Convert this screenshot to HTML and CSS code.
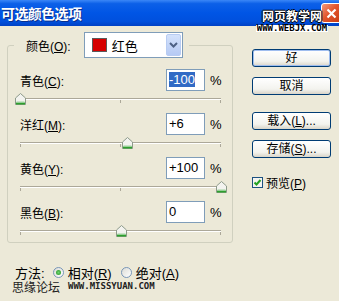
FILE: index.html
```html
<!DOCTYPE html>
<html lang="zh-CN">
<head>
    <meta charset="UTF-8" />
    <title>可选颜色选项</title>
    <link rel="stylesheet" href="styles.css">
</head>
<body>
    <svg class="defs" width="0" height="0">
        <symbol id="thumb" viewBox="0 0 11 12">
            <path d="M5.5 0.5 L10.5 5 V11.5 H0.5 V5 Z" fill="#f3f3ef" stroke="#8d9a8a" />
            <path d="M1 10.5 H10" stroke="#2ea02e" stroke-width="2" />
            <path d="M1.5 9 H9.5" stroke="#9ed29e" stroke-width="1" />
        </symbol>
    </svg>
    <div class="window">
        <div class="titlebar">
            <span class="title">可选颜色选项</span>
            <span class="close">
                <svg width="11" height="11" viewBox="0 0 11 11"><path d="M1.5 1.5 L9.5 9.5 M9.5 1.5 L1.5 9.5" stroke="#fff" stroke-width="2.2" /></svg>
            </span>
        </div>
        <!-- 水印 -->
        <div class="mark">
            <span class="mark-cn">网页教学网</span>
            <span class="mark-en">WWW.WEBJX.COM</span>
        </div>

        <div class="content">
            <div class="left">
                <fieldset class="group">
                    <legend class="group-title">
                        <div class="legend-inner">
                            <span class="label">颜色(<u>O</u>):</span>
                            <div class="combo">
                                <span class="swatch"></span>
                                <span class="combo-text">红色</span>
                                <span class="combo-btn">
                                    <svg width="9" height="6" viewBox="0 0 9 6"><path d="M1 1 L4.5 4.5 L8 1" fill="none" stroke="#4d6185" stroke-width="2" /></svg>
                                </span>
                            </div>
                        </div>
                    </legend>
                    <div class="rows">
                        <div class="row">
                            <div class="row-head">
                                <span class="label">青色(<u>C</u>):</span>
                                <span class="field"><span class="sel">-100</span></span>
                                <span class="pct">%</span>
                            </div>
                            <div class="slider">
                                <div class="track"></div>
                                <div class="ticks"><i></i><i></i><i></i></div>
                                <svg class="thumb" style="left:0%"><use href="#thumb" /></svg>
                            </div>
                        </div>
                        <div class="row">
                            <div class="row-head">
                                <span class="label">洋红(<u>M</u>):</span>
                                <span class="field">+6</span>
                                <span class="pct">%</span>
                            </div>
                            <div class="slider">
                                <div class="track"></div>
                                <div class="ticks"><i></i><i></i><i></i></div>
                                <svg class="thumb" style="left:53%"><use href="#thumb" /></svg>
                            </div>
                        </div>
                        <div class="row">
                            <div class="row-head">
                                <span class="label">黄色(<u>Y</u>):</span>
                                <span class="field">+100</span>
                                <span class="pct">%</span>
                            </div>
                            <div class="slider">
                                <div class="track"></div>
                                <div class="ticks"><i></i><i></i><i></i></div>
                                <svg class="thumb" style="left:100%"><use href="#thumb" /></svg>
                            </div>
                        </div>
                        <div class="row">
                            <div class="row-head">
                                <span class="label">黑色(<u>B</u>):</span>
                                <span class="field">0</span>
                                <span class="pct">%</span>
                            </div>
                            <div class="slider">
                                <div class="track"></div>
                                <div class="ticks"><i></i><i></i><i></i></div>
                                <svg class="thumb" style="left:50%"><use href="#thumb" /></svg>
                            </div>
                        </div>
                    </div>
                </fieldset>

                <div class="method">
                    <span>方法:</span>
                    <span class="radio checked"></span>
                    <span class="opt">相对(<u>R</u>)</span>
                    <span class="radio"></span>
                    <span class="opt">绝对(<u>A</u>)</span>
                </div>
                <div class="footer">
                    <span class="footer-cn">思缘论坛</span>
                    <span class="footer-en">WWW.MISSYUAN.COM</span>
                </div>
            </div>

            <div class="right">
                <button class="btn default">好</button>
                <button class="btn">取消</button>
                <button class="btn spaced">载入(<u>L</u>)...</button>
                <button class="btn">存储(<u>S</u>)...</button>
                <div class="check-row">
                    <span class="check">
                        <svg width="9" height="9" viewBox="0 0 9 9"><path d="M1.5 4.5 L3.5 6.5 L7.5 2" fill="none" stroke="#21a121" stroke-width="2" /></svg>
                    </span>
                    <span>预览(<u>P</u>)</span>
                </div>
            </div>
        </div>
    </div>
</body>
</html>
```

FILE: styles.css
```css
* {
    box-sizing: border-box;
}

body {
    margin: 0;
    background-color: #ece9d8;
    font-family: "Liberation Sans", "Noto Sans CJK SC", sans-serif;
    font-size: 12px;
    color: #000;
}

.defs {
    position: absolute;
}

.window {
    position: relative;
    width: 339px;
    height: 301px;
    overflow: hidden;
}

/* 标题栏 */
.titlebar {
    height: 26px;
    display: flex;
    align-items: center;
    justify-content: space-between;
    padding-left: 1px;
    background: linear-gradient(#3b87f7 0%, #0c60e8 14%, #0055e5 50%, #0050dd 82%, #0041c4 100%);
}

.title {
    color: #fff;
    font: bold 14px "Noto Sans CJK SC", sans-serif;
    letter-spacing: -0.6px;
    text-shadow: 1px 1px 0 #0a2f8c;
}

.close {
    align-self: flex-start;
    margin-top: 3px;
    margin-right: -3px;
    width: 21px;
    height: 20px;
    border: 1px solid #fff;
    border-radius: 3px;
    background: linear-gradient(135deg, #f39a7c, #e2552d 45%, #c73c12);
    display: flex;
    align-items: center;
    justify-content: center;
}

.mark {
    position: absolute;
    top: 9px;
    left: 256px;
    width: 72px;
    display: flex;
    flex-direction: column;
    align-items: center;
    z-index: 2;
}

.mark-cn {
    color: #fff;
    font: bold 12px "Noto Sans CJK SC", sans-serif;
    line-height: 13px;
    text-shadow: 1px 0 0 #000, -1px 0 0 #000, 0 1px 0 #000, 0 -1px 0 #000;
}

.mark-en {
    margin-top: 3px;
    width: 72px;
    text-align: center;
    background-color: #fff;
    font: bold 9px "DejaVu Sans Mono", monospace;
    line-height: 7px;
    color: #000;
}

/* 主体 */
.content {
    display: flex;
}

.left {
    width: 233px;
    padding: 6px 0 0 7px;
}

.group {
    margin: 0;
    width: 226px;
    border: 1px solid #d0d0bf;
    border-radius: 3px;
    padding: 11px 11px 3px 6px;
}

.group-title {
    padding: 0 6px 0 12px;
}

.legend-inner {
    display: flex;
    align-items: center;
}

.combo {
    margin-left: 13px;
    width: 99px;
    height: 26px;
    border: 1px solid #7f9db9;
    background-color: #fff;
    display: flex;
    align-items: center;
    padding-left: 7px;
}

.swatch {
    width: 15px;
    height: 14px;
    background-color: #d60000;
    border: 1px solid #5a5a5a;
}

.combo-text {
    margin-left: 5px;
    font-size: 13px;
}

.combo-btn {
    margin-left: auto;
    margin-right: 1px;
    width: 15px;
    height: 22px;
    border: 1px solid #b8ccf2;
    border-radius: 2px;
    background: linear-gradient(#d4e2fb, #b6caf4);
    display: flex;
    align-items: center;
    justify-content: center;
}

.rows {
    margin-left: 6px;
}

.row {
    margin-bottom: 6px;
}

.row:last-child {
    margin-bottom: 0;
}

.row-head {
    display: flex;
    align-items: center;
    height: 22px;
}

.row-head .label {
    flex: 1;
}

.field {
    width: 39px;
    height: 22px;
    border: 1px solid #7f9db9;
    background-color: #fff;
    padding-left: 2px;
    font-size: 13px;
    line-height: 20px;
}

.sel {
    background-color: #316ac5;
    color: #fff;
}

.pct {
    width: 11px;
    margin-left: 5px;
    font-size: 13px;
}

/* 滑块 */
.slider {
    position: relative;
    width: 201px;
    height: 16px;
    padding-top: 7px;
}

.track {
    height: 2px;
    border-top: 1px solid #aca899;
    border-bottom: 1px solid #fff;
}

.ticks {
    display: flex;
    justify-content: space-between;
}

.ticks i {
    width: 1px;
    height: 3px;
    background-color: #aca899;
}

.thumb {
    position: absolute;
    top: 2px;
    width: 11px;
    height: 12px;
    margin-left: -5px;
}

/* 方法 */
.method {
    margin-top: 22px;
    padding-left: 8px;
    display: flex;
    align-items: center;
    height: 14px;
    font-size: 13px;
}

.radio {
    width: 11px;
    height: 11px;
    margin-left: 8px;
    border: 1px solid #7896b8;
    border-radius: 50%;
    background: linear-gradient(135deg, #dcdcd6, #fff);
    display: flex;
    align-items: center;
    justify-content: center;
}

.radio + .opt {
    margin-left: 4px;
}

.opt + .radio {
    margin-left: 9px;
}

.radio.checked::after {
    content: "";
    width: 5px;
    height: 5px;
    border-radius: 50%;
    background: radial-gradient(#6fd36f, #1e8f1e);
}

.footer {
    display: flex;
    align-items: center;
    height: 14px;
    padding-left: 5px;
}

.footer-cn {
    font-size: 12px;
    color: #222;
}

.footer-en {
    margin-left: 8px;
    font: bold 9px "DejaVu Sans Mono", monospace;
    color: #222;
}

/* 右侧按钮 */
.right {
    margin-left: 19px;
    width: 79px;
    padding-top: 23px;
    display: flex;
    flex-direction: column;
}

.btn {
    height: 18px;
    margin: 0 0 10px 0;
    padding: 0;
    border: 1px solid #003c74;
    border-radius: 3px;
    background: linear-gradient(#ffffff, #f3f3ee 70%, #d9d4c8);
    font-family: "Liberation Sans", "Noto Sans CJK SC", sans-serif;
    font-size: 12px;
    line-height: 16px;
    color: #000;
}

.btn.default {
    box-shadow: inset 0 0 0 1px #9fbdef;
}

.btn.spaced {
    margin-top: 7px;
}

.check-row {
    margin-top: 9px;
    display: flex;
    align-items: center;
    height: 11px;
}

.check {
    width: 11px;
    height: 11px;
    border: 1px solid #1c5180;
    background-color: #f4f4f0;
    display: flex;
    align-items: center;
    justify-content: center;
    margin-right: 3px;
}
```
